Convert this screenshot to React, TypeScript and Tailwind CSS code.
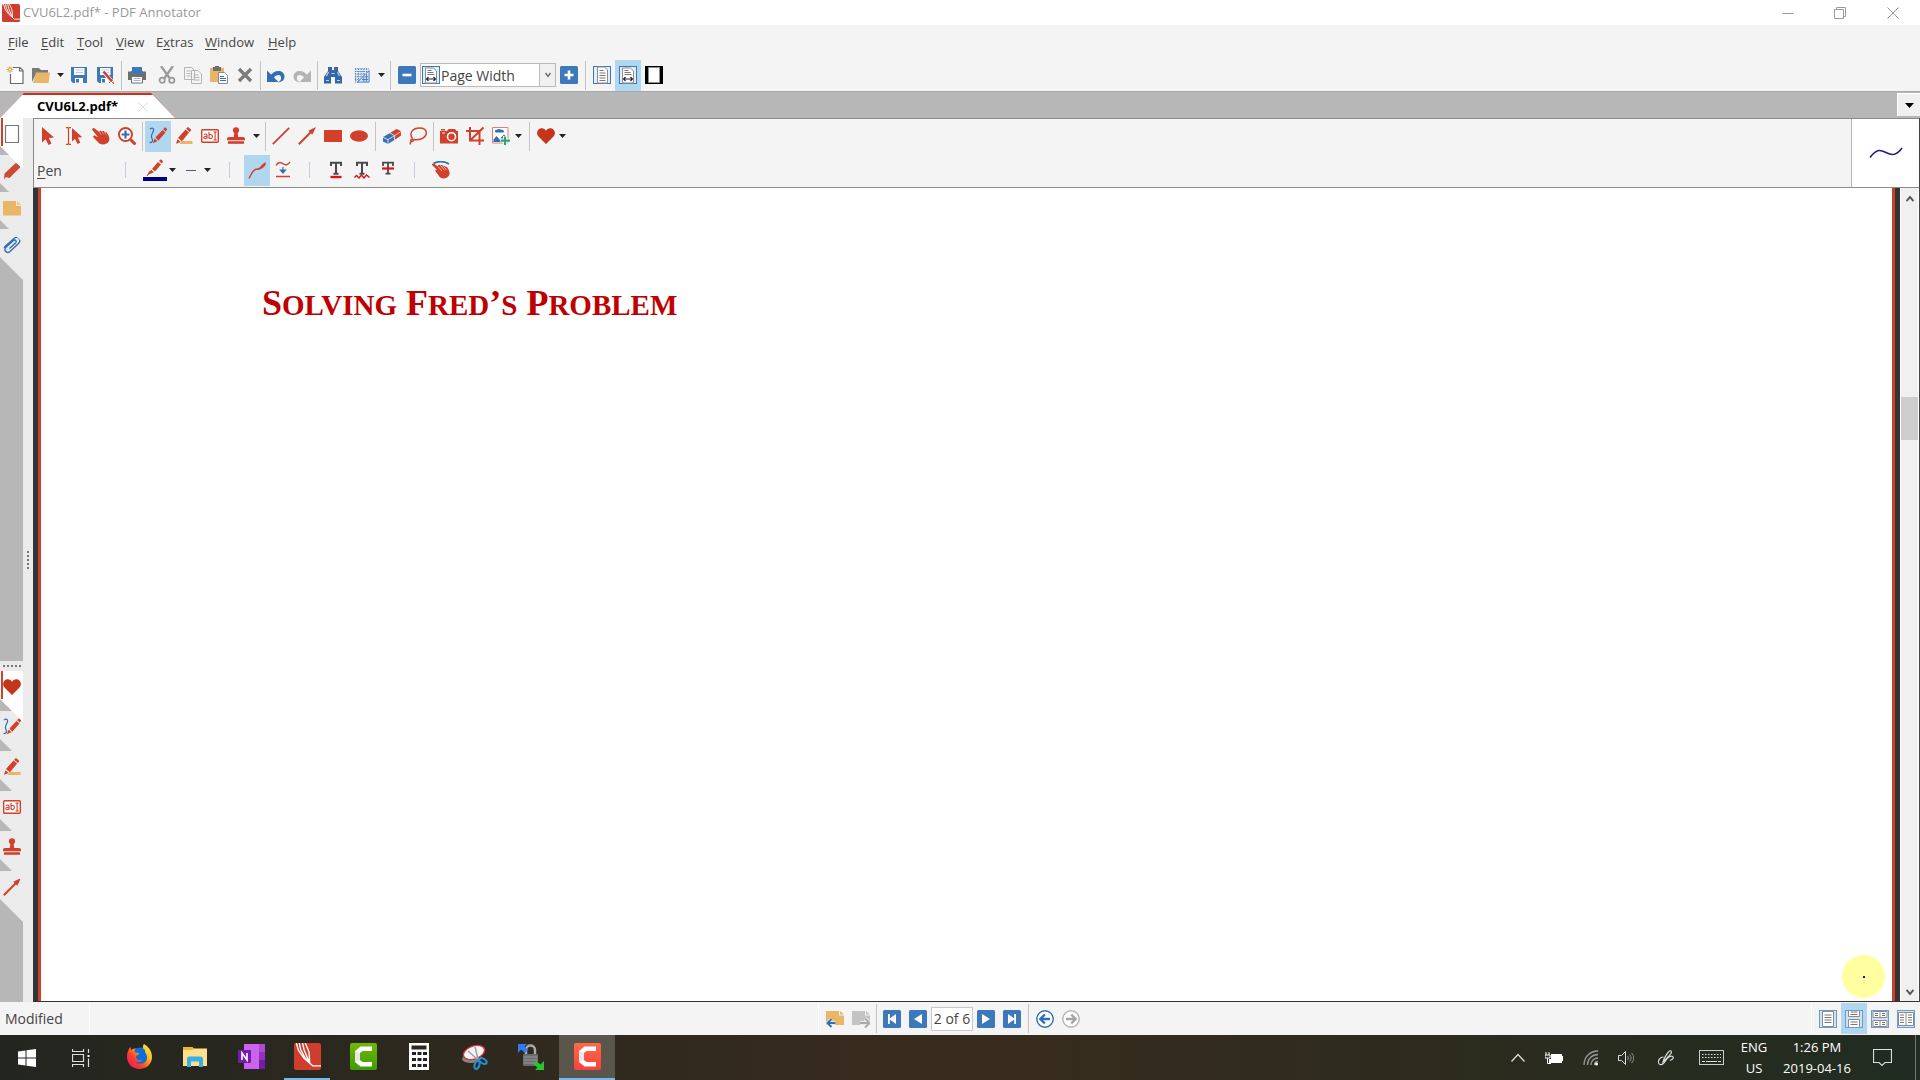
import React from "react";

type IconProps = { children: React.ReactNode; className?: string; box?: string };

const RED = "#d0402b";
const BLUE = "#2f6fb2";

function Icon({ children, className = "size-[18px]", box = "0 0 18 18" }: IconProps) {
  return (
    <svg viewBox={box} className={`shrink-0 ${className}`} fill="none" aria-hidden="true">
      {children}
    </svg>
  );
}

/* ---------- icons ---------- */
const PdfLogo = ({ className = "size-[18px]" }: { className?: string }) => (
  <Icon className={className}>
    <rect width="18" height="18" rx="1.5" fill="#cf3e2c" />
    <path d="M1.500 0 3 5l3.500 5 4 3.500M3.500 0l1 4.500 3 5.500 3 3.500M5.700 0l1 4.500 3.800 9M10.500 13.500 10 6 7.500 0M10.500 13.500 12.500 15.200H18" stroke="#fff" strokeWidth=".9" />
  </Icon>
);

const NewIcon = () => (
  <Icon>
    <path d="M7 1.500h7l3 3v13H4.500V8M13.500 1.500v3.500H17" stroke="#6b6b6b" strokeWidth="1.200" fill="#fff" />
    <path d="M4 0v7M.5 3.500h7M1.500 1l5 5M6.500 1l-5 5" stroke="#e6a444" strokeWidth="1" />
    <circle cx="4" cy="3.500" r="1.500" fill="#fff" stroke="#e6a444" />
  </Icon>
);
const OpenIcon = () => (
  <Icon className="h-[18px] w-5" box="0 0 20 18">
    <path d="M1 16V2h7l2 2h7v4H5z" fill="#7a7a7a" />
    <path d="M5 6.500h14L17.500 17H2z" fill="#eab566" />
  </Icon>
);
const SaveIcon = ({ pen = false }: { pen?: boolean }) => (
  <Icon>
    <path d="M1 1h16v16H3l-2-2z" fill="#3d78ba" />
    <path d="M4 2h10.500v7H4zM5 12h8v5H5z" fill="#fff" />
    <path d="M5.500 4h7.500M5.500 6.500h7.500" stroke="#b9cbe0" />
    <path d="M6 13h3v3.500H6z" fill="#3d78ba" />
    {pen && (
      <>
        <path d="m7.500 5.500 9 11" stroke="#fff" strokeWidth="4" />
        <path d="m7.500 5.500 8.500 10" stroke={RED} strokeWidth="2.600" />
        <path d="m16.500 16 1.500 2" stroke={RED} strokeWidth="1.200" />
      </>
    )}
  </Icon>
);
const PrintIcon = () => (
  <Icon>
    <path d="M4 1h10v5H4z" fill="#3d78ba" />
    <path d="M0 5.500h18V14H0z" fill="#6e6e6e" />
    <path d="M3 5h12v3H3z" fill="#3d78ba" />
    <path d="M3.500 10.500h11v6.500h-11z" fill="#fff" stroke="#6e6e6e" />
    <path d="M5.500 12.500h7M5.500 14.500h7" stroke="#9ab6d5" />
  </Icon>
);
const CutIcon = () => (
  <Icon>
    <path d="m3 0 8.500 12M15 0 6.500 12" stroke="#9a9a9a" strokeWidth="2.300" />
    <circle cx="4.200" cy="14.200" r="2.600" stroke="#9a9a9a" strokeWidth="1.800" />
    <circle cx="13.800" cy="14.200" r="2.600" stroke="#9a9a9a" strokeWidth="1.800" />
  </Icon>
);
const CopyIcon = () => (
  <Icon>
    <path d="M.5 1.500h7l3 3v9H.5zM7.500 4.500h6.500l3.500 3.500v9.500h-10z" fill="#f5f5f5" stroke="#b4b4b4" />
    <path d="M2.500 5h4M2.500 7.500h4M2.500 10h4M9.500 9h5M9.500 11.500h6M9.500 14h6" stroke="#b4b4b4" />
  </Icon>
);
const PasteIcon = () => (
  <Icon>
    <path d="M0 2h14v14H0z" fill="#eab566" />
    <path d="M3 1h2V0h4v1h2v4H3z" fill="#6e6e6e" />
    <path d="M8.500 6.500h6l3 3v8h-9z" fill="#fff" stroke="#8b8b8b" />
    <path d="M10 10.500h4M10 12.500h6M10 14.500h6" stroke={BLUE} />
  </Icon>
);
const DeleteIcon = () => (
  <Icon>
    <path d="m3 3 12 12M15 3 3 15" stroke="#7b7b7b" strokeWidth="3.300" />
  </Icon>
);
const UndoIcon = ({ redo = false }: { redo?: boolean }) => (
  <Icon className={redo ? "size-[18px] -scale-x-100" : "size-[18px]"}>
    <path d="M3 10.500C6 3 17.500 3 17.500 10.500c0 3.500-2.500 5.500-6.500 6 2.500-1.500 3.500-3.500 3-5.500C13 8 9 8.500 6.500 12z" fill={redo ? "#b4b4b4" : BLUE} />
    <path d="M0 4.500V16h11.500z" fill={redo ? "#b4b4b4" : BLUE} />
  </Icon>
);
const FindIcon = () => (
  <Icon>
    <path d="M4 1h4v3h2V1h4v4l4 6v6.500h-7V11H7v6.500H0V11l4-6z" fill="#3568a8" />
    <path d="m2.500 10 2-4M13.500 6l2 4M2 14.500h3M13 14.500h3M7.500 7.500h3" stroke="#bcd0e7" strokeWidth="1.200" />
  </Icon>
);
const GridIcon = () => (
  <Icon className="size-4">
    <path d="M1 2h16M1 5h16M1 8h13M1 11h10M1 14h7M1 17h4M2 2v15M5 2v14M8 2v12M11 2v9M14 2v7" stroke="#3d78ba" strokeDasharray="1.500 1" />
    <path d="M17 4v13H4z" stroke="#3d78ba" fill="#dbe7f4" />
    <path d="M9 14h7M12 11h4M11 11v6M14 8v9" stroke="#3d78ba" />
  </Icon>
);
const PageIcon = ({ width = false }: { width?: boolean }) => (
  <Icon>
    <rect x=".5" y=".5" width="17" height="17" stroke="#3d78ba" fill="#e3eef9" />
    <path d={width ? "M3.500 2h8l3 3v12h-11z" : "M4.500 1h7l3 3v13h-10z"} fill="#fff" stroke="#8f8f8f" />
    <path d={width ? "M5.500 4.500h4M5.500 6.500h6M5.500 8.500h7" : "M6.500 4.500h4M6.500 7h6M6.500 9.500h6M6.500 12h6M6.500 14.500h6"} stroke="#777" />
    {width && <path d="M4.500 13h9M6.500 11l-2 2 2 2M11.500 11l2 2-2 2" stroke="#222" strokeWidth="1.100" />}
  </Icon>
);
const FullPageIcon = () => (
  <Icon>
    <path d="M0 0h18v18H0z" fill="#000" />
    <path d="M3.500 1.500h11v15h-11z" fill="#fff" stroke="#8d8d8d" />
  </Icon>
);
const SquareIcon = ({ d, stroke = false }: { d: string; stroke?: boolean }) => (
  <Icon>
    <rect width="18" height="18" rx="1.500" fill="#3d78ba" />
    <path d={d} fill={stroke ? "none" : "#fff"} stroke={stroke ? "#fff" : "none"} strokeWidth="2.600" />
  </Icon>
);

const PointerIcon = () => (
  <Icon>
    <path d="M2 0v15.500l3.600-3.300L8.500 18l3-1.500L8.800 11 14 10.500z" fill={RED} />
  </Icon>
);
const TextSelectIcon = () => (
  <Icon>
    <path d="M0 .7h1.700l.8.8.8-.8H5M2.500 1v16M0 17.300h1.700l.8-.8.8.8H5" stroke={RED} strokeWidth="1.200" />
    <path d="M6 1v13.500l3-2.800 2.500 5.300 2.800-1.400-2.500-5 4.500-.4z" fill={RED} />
  </Icon>
);
const HandIcon = () => (
  <Icon>
    <path d="M.3 1.800C1 .6 2.200.9 3 1.700L7.300 5c.2-1.300 1.700-1.700 2.600-.4 1-1 2.300-.5 2.900.8 1.300-.5 2.400.2 2.800 1.600 2.500 3.600 2.500 7.700-1 9.600-3.600 1.500-7 .9-8.400-1.300L1.500 10.500c-1-1.700.6-2.500 2-1.600L6 10 .7 3.600C.2 3 0 2.400.3 1.800z" fill={RED} />
    <path d="m7.300 5 1.800 2.500M9.900 4.600l1.800 2.600M12.800 5.400l1.400 2.400" stroke="#f4b5a9" strokeWidth=".7" />
  </Icon>
);
const ZoomIcon = () => (
  <Icon>
    <circle cx="7.500" cy="7.500" r="6.500" fill="#fff" stroke={RED} strokeWidth="2" />
    <path d="m12.500 12.500 5 5" stroke={RED} strokeWidth="3" />
    <path d="M7.500 3.500v8M3.500 7.500h8" stroke={BLUE} strokeWidth="2.200" />
  </Icon>
);
const PenIcon = () => (
  <Icon>
    <path d="M1 2C4 0 5.500 2 4 5S1.500 9 3 11.500 2.500 16 .5 15.500" stroke={BLUE} strokeWidth="1.200" />
    <path d="m6.500 10.500 7-7.500 3 2.600-7.200 8.100z" fill={RED} />
    <path d="m14.200 2.200 1-1.200c.5-.7 1.300-.6 1.900-.1l.5.500c.6.600.6 1.200.1 1.800l-1 1.200z" fill={RED} />
    <path d="m5.700 11.500 2.700 2.700-4.700 2z" fill={RED} />
  </Icon>
);
const MarkerIcon = () => (
  <Icon>
    <path d="M6 14h11.500v3H5z" fill="#eab566" />
    <path d="m3 11 7.500-8.500 3.600 3.100L7 14.200z" fill={RED} />
    <path d="m11.200 1.700 1-1.100c.4-.5 1-.5 1.500-.1l2 1.700c.5.500.6 1 .1 1.600l-1 1.200z" fill={RED} />
    <path d="M2.500 12.200 5.700 15 1 16.800z" fill={RED} />
  </Icon>
);
const TextBoxIcon = () => (
  <Icon>
    <rect x=".7" y="2.700" width="16.600" height="12.600" rx="1" stroke={RED} strokeWidth="1.400" fill="#fff" />
    <path d="M3 7.500c1-.7 3-.7 3 .8v3.500M6 9.300c-2-.2-3.200.2-3.200 1.300 0 1.500 2.500 1.400 3.200 0M8 5v6.700M8 8.500c.7-1.600 3.400-1.400 3.400 1 0 2.500-2.700 2.700-3.400 1M12.500 5h1.200l.4.400.5-.4h1.200M14.100 5.400v7.200M12.500 13h1.200l.4-.4.5.4h1.200" stroke={RED} strokeWidth="1.100" />
  </Icon>
);
const StampIcon = () => (
  <Icon>
    <circle cx="9" cy="3.300" r="3.100" fill={RED} />
    <path d="M7.500 5h3l.7 5H16c1.200 0 2 .8 2 2v1.200H0V12c0-1.200.8-2 2-2h4.800z" fill={RED} />
    <path d="M1 14.200h16V16.800H1z" fill={RED} />
  </Icon>
);
const LineIcon = () => (
  <Icon>
    <path d="M.8 17.200 17.200.8" stroke={RED} strokeWidth="1.800" />
  </Icon>
);
const ArrowIcon = () => (
  <Icon>
    <path d="M.8 17.200 13 5" stroke={RED} strokeWidth="2" />
    <path d="M18 0 10.300 3.700l4 4z" fill={RED} />
  </Icon>
);
const RectIcon = () => (
  <Icon>
    <path d="M0 3h18v12H0z" fill={RED} />
  </Icon>
);
const EllipseIcon = () => (
  <Icon>
    <ellipse cx="9" cy="9" rx="9" ry="5.800" fill={RED} />
  </Icon>
);
const EraserIcon = () => (
  <Icon>
    <path d="M7 6 13.500 2 18 4v4.500L11.500 13 8 10.500z" fill={RED} />
    <path d="M0 10 7 6l4.500 2.500V13L5 17l-5-2.500z" fill="#3972b4" />
    <path d="m0 10.200 5 2.500 6.500-4L18 4.500M5 12.700V17M7 6l4.500 2.700V13" stroke="#eef3f9" strokeWidth=".8" />
  </Icon>
);
const LassoIcon = () => (
  <Icon>
    <path d="M3.500 11.500C-.5 6 4 1 10.500 1c4 0 6.800 1.800 6.800 5 0 4-4.800 6.800-9.300 6.800-2.300 0-4.500-.8-5.500-.3-1.500.7-.8 2.200.5 2 1.500-.2 2-1.300 1.500-2.500M2.500 14.500C1.500 15 1 16 1.500 17.500" stroke={RED} strokeWidth="1.400" />
  </Icon>
);
const CameraIcon = () => (
  <Icon>
    <path d="M1 4h6l1.500-2H15l1.500 2H18v12.500H0V4z" fill={RED} />
    <path d="M1 2h4v1.500H1z" fill={RED} />
    <circle cx="11.500" cy="9.700" r="4" fill={RED} stroke="#fff" strokeWidth="1.600" />
    <path d="M2 6h3" stroke="#fff" />
  </Icon>
);
const CropIcon = () => (
  <Icon>
    <path d="M4 0v13.500h14M0 4h13.500v14M4 13.500 17.500.5" stroke={RED} strokeWidth="2" />
  </Icon>
);
const ImageIcon = () => (
  <Icon>
    <path d="M.5.5h15.500v15.500H.5z" fill="#fff" stroke="#d98175" />
    <path d="M3 4c0-1 1-1.500 2-1.300 1-1 3-1 4 0C10.500 2.500 12 3 12 4.300c0 .8-.8 1.200-1.500 1.200h-6C3.500 5.500 3 5 3 4z" fill={BLUE} />
    <path d="M1.500 15v-2.500L4.500 9 9 14v1zM8.500 11l3.500-3.500 3 3V12H9z" fill={BLUE} />
    <path d="M13 9v9M8.500 13.500H18" stroke="#fff" strokeWidth="4" />
    <path d="M13 9.500V18M9 13.700h9" stroke="#2fa275" strokeWidth="2.200" />
  </Icon>
);
const HeartIcon = () => (
  <Icon>
    <path d="M9 17 1.500 9.500C-1.500 6 .8 1.300 4.700 1.300 6.800 1.300 8.300 2.300 9 4c.7-1.700 2.200-2.700 4.300-2.700 3.900 0 6.200 4.700 3.200 8.200z" fill="#c5351c" />
  </Icon>
);
const StrokeIcon = () => (
  <Icon>
    <path d="M1 17.500C3.500 13 4.500 9 8 8.300s5-.5 7-4.300" stroke={RED} strokeWidth="1.400" />
    <path d="M8 8.700C11.500 8 13 4 15.500 2.500L17.500 1l.3 2.500C16 6.500 13 9 8 9z" fill={RED} />
  </Icon>
);
const SmoothIcon = () => (
  <Icon>
    <path d="M2 4.500C5-.5 8 2 9.500 3S14 4.500 16 1M2 15.500h14" stroke={RED} strokeWidth="1.400" />
    <path d="M9 6v5.500M6.500 9 9 12l2.500-3z" stroke={BLUE} fill={BLUE} strokeWidth="1.200" />
  </Icon>
);
const LetterIcon = ({ kind }: { kind: "under" | "wave" | "strike" }) => (
  <Icon>
    <path d="M4 5V1.700h10V5M9 1.700v11M6.500 12.700h5" stroke="#4a4a4a" strokeWidth={kind === "strike" ? 1.800 : 2} />
    {kind === "under" && <path d="M3.500 16h11" stroke="#e01010" strokeWidth="2.400" />}
    {kind === "wave" && <path d="m1.500 16.500 2-2 2.500 2.500L8.500 14l2.500 3 2.500-3 3 2.500" stroke="#e01010" strokeWidth="1.400" />}
    {kind === "strike" && <path d="M3 7.500h12" stroke="#e01010" strokeWidth="2.200" />}
  </Icon>
);
const GestureIcon = () => (
  <Icon>
    <path d="M1.500 2.500C5.500 0 12 0 17 3" stroke={BLUE} strokeWidth="1.800" />
    <path d="M0 3.200c.7-1 2-.6 2.800.1L6.500 6l-.7-1.500c.8-1.300 2-.9 2.800.1.900-1 2-.6 2.600.3 1-.6 2.200 0 2.500 1 .9-.3 1.600.2 1.900 1.100 2.400 3.500 3 7-.1 9.200-3 1.800-6 1.800-8-.4l-4-5.500c-.7-1.300.5-2 1.700-1.300L1 5C.2 4.300-.2 3.800 0 3.200z" fill={RED} />
    <path d="m6.500 6 3.500 4M8.600 4.600l4 4.700M11.200 4.900l3.300 4" stroke="#fff" strokeWidth=".6" />
  </Icon>
);
const ThumbPenIcon = () => (
  <Icon>
    <path d="M1.500 11.500 13 .8 17.500 5 6.500 16l-3.500-1-2 2.500z" fill="#cb4a33" />
  </Icon>
);
const NoteIcon = () => (
  <Icon>
    <path d="M0 2h13v5h5v9.500H0z" fill="#eab566" />
    <path d="M14 2v4h4z" fill="#f0c886" />
  </Icon>
);
const ClipIcon = () => (
  <Icon>
    <path d="m6.500 12.500 6-5.500c1.800-1.800-.5-4-2.300-2.300L3 11.200c-3 3 1 7 4 4.300l8.500-8C19 4 14.500-.8 11 2.500L2.500 10c-.5.500-1 1.200-1.200 2" stroke={BLUE} strokeWidth="1.400" />
  </Icon>
);
const BlankPageIcon = () => (
  <Icon>
    <path d="M2.500.5h13v17h-13z" fill="#fff" stroke="#777" strokeWidth="1.200" />
  </Icon>
);
const NavNoteIcon = ({ next = false }: { next?: boolean }) => (
  <Icon>
    <path d="M0 1h13v4.500h5V15H0z" fill={next ? "#c4c4c4" : "#eab566"} />
    <path d="M14 1v3.500h4z" fill={next ? "#c4c4c4" : "#eab566"} />
    {next ? (
      <path d="M8 13h9M13 8.500l4.500 4.500-4.500 4.500" stroke="#f4f4f4" strokeWidth="3.600" />
    ) : (
      <path d="M1.500 13h8M5.500 9 1.500 13l4 4" stroke="#f4f4f4" strokeWidth="3.600" />
    )}
    {next ? (
      <path d="M8 13h9M13 8.500l4.500 4.500-4.500 4.500" stroke="#a9a9a9" strokeWidth="2" />
    ) : (
      <path d="M1.500 13h8M5.500 9 1.500 13l4 4" stroke={BLUE} strokeWidth="2" />
    )}
  </Icon>
);
const RoundArrow = ({ next = false }: { next?: boolean }) => (
  <Icon className={next ? "size-[18px] -scale-x-100" : "size-[18px]"}>
    <circle cx="9" cy="9" r="8.200" fill="#fff" stroke={next ? "#b5b5b5" : BLUE} strokeWidth="1.400" />
    <path d="M4.500 9h9.500M8.800 4.500 4.300 9l4.500 4.500" stroke={next ? "#a5a5a5" : BLUE} strokeWidth="2.400" />
  </Icon>
);
const ViewIcon = ({ d, pages }: { d: string; pages: string }) => (
  <Icon>
    <rect x=".5" y=".5" width="17" height="17" stroke="#6b9bd0" fill="#cfe2f4" />
    <path d={pages} fill="#fff" stroke="#8b8b8b" />
    <path d={d} stroke="#777" />
  </Icon>
);

/* ---------- building blocks ---------- */
function ToolButton({ label, active = false, children, className = "w-[26px]" }: { label: string; active?: boolean; children: React.ReactNode; className?: string }) {
  return (
    <button type="button" aria-label={label} className={`flex h-[31px] shrink-0 items-center justify-center ${className} ${active ? "bg-[#b1d6f0]" : ""}`}>
      {children}
    </button>
  );
}
const Caret = ({ label, className = "w-3" }: { label: string; className?: string }) => (
  <ToolButton label={label} className={className}>
    <svg viewBox="0 0 7 4" className="h-1 w-[7px] shrink-0" aria-hidden="true">
      <path d="M0 0h7L3.500 4z" fill="#222" />
    </svg>
  </ToolButton>
);
const Sep = ({ className = "mx-0.5 h-[29px] bg-[#c4c4c4]" }: { className?: string }) => <div className={`w-px shrink-0 ${className}`} />;

function SideTabs({ items, pitch }: { items: { label: string; icon: React.ReactNode }[]; pitch: string }) {
  return (
    <div className="flex flex-col">
      {items.map((it, i) => (
        <div key={it.label} className={pitch} style={{ zIndex: items.length - i }}>
          <button
            type="button"
            aria-label={it.label}
            className={`flex h-[51px] w-[23px] items-start [clip-path:polygon(0_0,100%_0,100%_100%,0_28px)] ${i === 0 ? "bg-white" : "bg-[#ebebeb]"}`}
          >
            <span className={`ml-px h-7 w-0.5 ${i === 0 ? "bg-[#d0402b]" : ""}`} />
            <span className="flex h-8 items-center">{it.icon}</span>
          </button>
        </div>
      ))}
    </div>
  );
}

const MENUS = [
  ["", "F", "ile", "w-[33px]"],
  ["", "E", "dit", "w-9"],
  ["", "T", "ool", "w-[39px]"],
  ["", "V", "iew", "w-10"],
  ["E", "x", "tras", "w-[49px]"],
  ["", "W", "indow", "w-[63px]"],
  ["", "H", "elp", "w-10"],
];

function TaskItem({ label, children, className = "w-14 border-transparent" }: { label: string; children: React.ReactNode; className?: string }) {
  return (
    <button type="button" aria-label={label} className={`flex h-[45px] shrink-0 items-center justify-center border-b-2 ${className}`}>
      {children}
    </button>
  );
}

const CamtasiaIcon = ({ from, to, id }: { from: string; to: string; id: string }) => (
  <Icon className="size-[27px]" box="0 0 27 27">
    <defs>
      <linearGradient id={id} x1="0" y1="0" x2="0" y2="1">
        <stop stopColor={from} />
        <stop offset="1" stopColor={to} />
      </linearGradient>
    </defs>
    <rect width="27" height="27" rx="2" fill={`url(#${id})`} />
    <path d="M22 3.500V8h-9.500l-2.500 2v7l2.500 2H22v4.500H10.500L5 19V8l5.500-4.500z" fill="#fff" />
    <path d="m5 8 5 2v7l-5 2z" fill="#e6e6e6" />
  </Icon>
);

export default function App() {
  return (
    <div className="flex h-screen w-full flex-col overflow-hidden bg-[#f4f4f4] font-['Open_Sans','Noto_Sans',sans-serif] text-[14px] text-[#444]">
      {/* Title bar */}
      <header className="flex h-[25px] shrink-0 items-center bg-white pl-[2px]">
        <PdfLogo />
        <h1 className="ml-[3px] text-[13px] text-[#999]">CVU6L2.pdf* - PDF Annotator</h1>
        <div className="ml-auto flex items-center">
          <button type="button" aria-label="Minimize" className="flex w-[52px] justify-center">
            <Icon className="size-3" box="0 0 12 12"><path d="M.5 6.500h11" stroke="#999" /></Icon>
          </button>
          <button type="button" aria-label="Restore" className="flex w-[52px] justify-center">
            <Icon className="size-3" box="0 0 12 12"><path d="M.5 2.500h9v9h-9zM2.500 2V.5h9v9H10" stroke="#999" /></Icon>
          </button>
          <button type="button" aria-label="Close" className="flex w-[54px] justify-center">
            <Icon className="size-3" box="0 0 12 12"><path d="m.5.5 11 11M11.500.5l-11 11" stroke="#999" /></Icon>
          </button>
        </div>
      </header>

      {/* Menu */}
      <nav className="flex h-[34px] shrink-0 items-center pl-2 pt-0.5 text-[13px]">
        {MENUS.map(([pre, key, post, width]) => (
          <button type="button" key={key + post} className={`text-left ${width}`}>
            {pre}<span className="underline underline-offset-2">{key}</span>{post}
          </button>
        ))}
      </nav>

      {/* Main toolbar */}
      <div className="flex h-8 shrink-0 items-center pl-[2px]">
        <ToolButton label="New"><NewIcon /></ToolButton>
        <ToolButton label="Open"><OpenIcon /></ToolButton>
        <Caret label="Recent files" />
        <ToolButton label="Save"><SaveIcon /></ToolButton>
        <ToolButton label="Save as"><SaveIcon pen /></ToolButton>
        <Sep className="ml-[3px] mr-0.5 h-[29px] bg-[#c4c4c4]" />
        <ToolButton label="Print"><PrintIcon /></ToolButton>
        <div className="ml-1 flex">
          <ToolButton label="Cut"><CutIcon /></ToolButton>
          <ToolButton label="Copy"><CopyIcon /></ToolButton>
          <ToolButton label="Paste"><PasteIcon /></ToolButton>
          <ToolButton label="Delete"><DeleteIcon /></ToolButton>
        </div>
        <Sep />
        <ToolButton label="Undo"><UndoIcon /></ToolButton>
        <ToolButton label="Redo"><UndoIcon redo /></ToolButton>
        <Sep />
        <ToolButton label="Find"><FindIcon /></ToolButton>
        <div className="ml-[3px] flex">
          <ToolButton label="Grid"><GridIcon /></ToolButton>
          <Caret label="Grid options" />
        </div>
        <Sep className="mx-[3px] h-[29px] bg-[#c4c4c4]" />
        <ToolButton label="Zoom out"><SquareIcon d="M4.500 9h9" stroke /></ToolButton>
        <div className="flex h-6 w-[136px] shrink-0 items-center border border-[#b9b9b9] bg-white pl-px">
          <PageIcon width />
          <div className="relative flex h-full flex-1">
            <select aria-label="Zoom" className="h-full w-full appearance-none bg-transparent pl-px text-[14px] outline-none">
              <option>Page Width</option>
            </select>
            <span className="pointer-events-none absolute inset-y-0 right-0 flex w-4 items-center justify-center border-l border-[#b9b9b9] bg-[#f0f0f0]">
              <Icon className="size-2" box="0 0 8 8"><path d="m1.500 2 2.500 3.500L6.500 2" stroke="#666" strokeWidth="1.300" /></Icon>
            </span>
          </div>
        </div>
        <ToolButton label="Zoom in"><SquareIcon d="M4.500 9h9M9 4.500v9" stroke /></ToolButton>
        <Sep className="mx-[3px] h-[29px] bg-[#c4c4c4]" />
        <ToolButton label="Full page"><PageIcon /></ToolButton>
        <ToolButton label="Page width" active><PageIcon width /></ToolButton>
        <ToolButton label="Full screen"><FullPageIcon /></ToolButton>
      </div>

      {/* Document tabs */}
      <div className="flex h-[27px] shrink-0 items-end justify-between border-t border-[#a8a8a8] bg-[#b7b7b7]">
        <div className="flex h-[25px] w-[175px] bg-[#d0301a] [clip-path:polygon(24px_0,151px_0,100%_100%,0_100%)]">
          <div className="mt-0.5 flex flex-1 items-center bg-white pl-[37px] text-black">
            <button type="button" className="text-[13px] font-bold">CVU6L2.pdf*</button>
            <button type="button" aria-label="Close tab" className="ml-auto mr-[27px]">
              <Icon className="size-[10px]" box="0 0 10 10"><path d="m.5.5 9 9M9.500.5l-9 9" stroke="#ddd" /></Icon>
            </button>
          </div>
        </div>
        <button type="button" aria-label="Tab list" className="mb-[2px] flex h-[23px] w-[23px] items-center justify-center border-l border-t border-white bg-[#f0f0f0]">
          <Icon className="h-[5px] w-[9px]" box="0 0 9 5"><path d="M0 0h9L4.500 5z" fill="#000" /></Icon>
        </button>
      </div>

      <div className="flex min-h-0 flex-1">
        {/* Side panel */}
        <aside className="flex w-[33px] shrink-0 bg-[#ebebeb]">
          <div className="flex w-[23px] flex-col">
            <div className="h-[543px] shrink-0 bg-[#b7b7b7]">
              <SideTabs
                pitch="relative h-[37px]"
                items={[
                  { label: "Pages", icon: <BlankPageIcon /> },
                  { label: "Annotations", icon: <ThumbPenIcon /> },
                  { label: "Bookmarks", icon: <NoteIcon /> },
                  { label: "Attachments", icon: <ClipIcon /> },
                ]}
              />
            </div>
            <div className="flex h-[10px] shrink-0 items-center justify-center gap-0.5">
              {[0, 1, 2, 3, 4].map((n) => <span key={n} className="size-0.5 bg-[#777]" />)}
            </div>
            <div className="flex-1 bg-[#b7b7b7]">
              <SideTabs
                pitch="relative h-10"
                items={[
                  { label: "Favorites", icon: <HeartIcon /> },
                  { label: "Pen favorites", icon: <PenIcon /> },
                  { label: "Marker favorites", icon: <MarkerIcon /> },
                  { label: "Text favorites", icon: <TextBoxIcon /> },
                  { label: "Stamp favorites", icon: <StampIcon /> },
                  { label: "Arrow favorites", icon: <ArrowIcon /> },
                ]}
              />
            </div>
          </div>
          <div className="flex flex-1 flex-col items-center gap-0.5 pt-[433px]">
            {[0, 1, 2, 3, 4].map((n) => <span key={n} className="size-0.5 bg-[#777]" />)}
          </div>
        </aside>

        <main className="flex min-w-0 flex-1 flex-col border-r border-[#444]">
          {/* Annotation toolbars */}
          <div className="flex h-[70px] shrink-0 border-y border-l border-[#8b8b8b]">
            <div className="min-w-0 flex-1">
              <div className="flex h-[34px] items-center pl-[2px]">
                <ToolButton label="Select"><PointerIcon /></ToolButton>
                <ToolButton label="Select text"><TextSelectIcon /></ToolButton>
                <ToolButton label="Pan"><HandIcon /></ToolButton>
                <ToolButton label="Zoom tool"><ZoomIcon /></ToolButton>
                <Sep />
                <ToolButton label="Pen" active><PenIcon /></ToolButton>
                <ToolButton label="Marker"><MarkerIcon /></ToolButton>
                <ToolButton label="Text"><TextBoxIcon /></ToolButton>
                <ToolButton label="Stamp"><StampIcon /></ToolButton>
                <Caret label="Stamp options" className="w-[14px]" />
                <Sep />
                <ToolButton label="Line"><LineIcon /></ToolButton>
                <ToolButton label="Arrow"><ArrowIcon /></ToolButton>
                <ToolButton label="Rectangle"><RectIcon /></ToolButton>
                <ToolButton label="Ellipse"><EllipseIcon /></ToolButton>
                <Sep className="mx-[3px] h-[29px] bg-[#c4c4c4]" />
                <ToolButton label="Eraser"><EraserIcon /></ToolButton>
                <ToolButton label="Lasso"><LassoIcon /></ToolButton>
                <Sep />
                <ToolButton label="Snapshot"><CameraIcon /></ToolButton>
                <ToolButton label="Crop"><CropIcon /></ToolButton>
                <ToolButton label="Insert image"><ImageIcon /></ToolButton>
                <Caret label="Image options" className="w-2" />
                <Sep className="ml-[7px] mr-[3px] h-[29px] bg-[#c4c4c4]" />
                <ToolButton label="Favorites menu"><HeartIcon /></ToolButton>
                <Caret label="Favorites options" className="w-1.5" />
              </div>
              <div className="flex h-[34px] items-center pl-[3px]">
                <span className="w-[88px] text-[14px]"><span className="underline underline-offset-2">P</span>en</span>
                <Sep className="h-4 bg-[#c4cde0]" />
                <ToolButton label="Pen color" className="ml-4 w-[26px] flex-col">
                  <Icon>
                    <path d="m6 10 6-7 3 2.600-6 7zM13 2l1-1c.6-.6 1.200-.5 1.700 0l.8.800c.5.5.5 1.100 0 1.700l-.8 1zM5 10.800l3 2.500L1.500 16z" fill={RED} />
                    <path d="M1 17 4 12" stroke={RED} />
                  </Icon>
                  <span className="h-[4px] w-6 bg-[#00007e]" />
                </ToolButton>
                <Caret label="Pen color options" className="w-2" />
                <ToolButton label="Line width" className="ml-[3px] w-6"><span className="h-px w-[10px] bg-[#4c5d82]" /></ToolButton>
                <Caret label="Line width options" className="w-2" />
                <Sep className="ml-[18px] h-4 bg-[#c4cde0]" />
                <ToolButton label="Freehand" active className="ml-[14px] w-[26px]"><StrokeIcon /></ToolButton>
                <ToolButton label="Smooth"><SmoothIcon /></ToolButton>
                <Sep className="mx-[13px] h-4 bg-[#c4cde0]" />
                <ToolButton label="Underline text"><LetterIcon kind="under" /></ToolButton>
                <ToolButton label="Squiggly text"><LetterIcon kind="wave" /></ToolButton>
                <ToolButton label="Strike out text"><LetterIcon kind="strike" /></ToolButton>
                <Sep className="mx-[13px] h-4 bg-[#c4cde0]" />
                <ToolButton label="Touch input"><GestureIcon /></ToolButton>
              </div>
            </div>
            <div className="flex w-[68px] items-center justify-center border-l border-[#b5b5b5] bg-white">
              <Icon className="h-3 w-[34px]" box="0 0 34 12">
                <path d="M1 10.500C8 1 12 3 17 5.500s10 4 16-4.500" stroke="#1a1a8c" strokeWidth="1.500" />
              </Icon>
            </div>
          </div>

          {/* Document */}
          <div className="flex min-h-0 flex-1 border-b border-[#333]">
            <div className="w-[5px] shrink-0 bg-[#333436]" />
            <article className="relative min-w-0 flex-1 border-x-[3px] border-[#cb3f2b] bg-white">
              <h2 className="pl-[221px] pt-[94px] font-['Liberation_Serif',serif] text-[29px] font-bold uppercase leading-[42px] text-[#c00000]">
                <span className="text-[36px]">S</span>olving<span className="text-[36px]"> F</span>red<span className="text-[36px]">’</span>s<span className="text-[36px]"> P</span>roblem
              </h2>
              <div className="absolute bottom-[3px] right-[7px] flex size-[43px] items-center justify-center rounded-full bg-[#ffffa0]">
                <span className="size-0.5 bg-[#1a1a8c]" />
              </div>
            </article>
            <div className="w-[5px] shrink-0 bg-[#333436]" />
            <div className="flex w-[19px] shrink-0 flex-col border-x border-white bg-[#f0f0f0]">
              <button type="button" aria-label="Scroll up" className="flex h-[22px] items-center justify-center">
                <Icon className="size-2" box="0 0 8 8"><path d="m.5 6 3.500-4 3.500 4" stroke="#555" strokeWidth="1.900" /></Icon>
              </button>
              <div className="grow-[187]" />
              <div className="h-[43px] bg-[#cdcdcd]" />
              <div className="grow-[543]" />
              <button type="button" aria-label="Scroll down" className="flex h-[18px] items-center justify-center">
                <Icon className="size-2" box="0 0 8 8"><path d="m.5 2 3.500 4 3.500-4" stroke="#555" strokeWidth="1.900" /></Icon>
              </button>
            </div>
          </div>
        </main>
      </div>

      {/* Status bar */}
      <footer className="flex h-[33px] shrink-0 items-center">
        <div className="flex flex-1 items-center">
          <span className="w-[84px] pl-[5px] text-[14px]">Modified</span>
          <Sep className="ml-[5px] h-[29px] bg-white" />
        </div>
        <div className="mr-[17px] flex items-center">
          <Sep className="mr-[3px] h-[29px] bg-white" />
          <ToolButton label="Previous annotated page"><NavNoteIcon /></ToolButton>
          <ToolButton label="Next annotated page"><NavNoteIcon next /></ToolButton>
          <Sep />
          <ToolButton label="First page"><SquareIcon d="M5 4h1.800v4.500L13 4v10L6.800 9.500V14H5z" /></ToolButton>
          <ToolButton label="Previous page"><SquareIcon d="M13 4v10L5 9z" /></ToolButton>
          <input aria-label="Page" defaultValue="2 of 6" className="h-6 w-[42px] border border-[#c8c8c8] bg-white text-center text-[14px] outline-none" />
          <ToolButton label="Next page"><SquareIcon d="M5 4v10l8-5z" /></ToolButton>
          <ToolButton label="Last page"><SquareIcon d="M13 4h-1.800v4.500L5 4v10l6.200-4.500V14H13z" /></ToolButton>
          <Sep className="mx-[3px] h-[29px] bg-[#c4c4c4]" />
          <ToolButton label="Back"><RoundArrow /></ToolButton>
          <ToolButton label="Forward"><RoundArrow next /></ToolButton>
        </div>
        <div className="flex flex-1 items-center justify-end pr-px">
          <Sep className="mr-[3px] h-[29px] bg-white" />
          <ToolButton label="Single page"><ViewIcon pages="M3.500 1.500h11v15h-11z" d="M5.500 5h7M5.500 7.500h7M5.500 10h7M5.500 12.500h7" /></ToolButton>
          <ToolButton label="Continuous" active><ViewIcon pages="M3.500 1v5.500h11V1M3.500 17V9.500h11V17" d="M5.500 2h7M5.500 4.500h7M5.500 12h7M5.500 14.500h7" /></ToolButton>
          <ToolButton label="Two pages continuous"><ViewIcon pages="M2 1.500h14v6H2zM2 10.500h14v6H2zM9 1v6.500M9 10.500v6" d="M4 3.500h3M4 5.500h3M11 3.500h3M11 5.500h3M4 12.500h3M4 14.500h3M11 12.500h3M11 14.500h3" /></ToolButton>
          <ToolButton label="Two pages"><ViewIcon pages="M1.500 2.500h15v13h-15zM9 2.500v13" d="M3 5h4M3 7.500h4M3 10h4M3 12.500h4M11 5h4M11 7.500h4M11 10h4M11 12.500h4" /></ToolButton>
        </div>
      </footer>

      {/* Taskbar */}
      <div className="flex h-[45px] shrink-0 items-center bg-linear-to-r from-[#23261f] via-[#382b1d] via-50% to-[#202c20] text-white">
        <div className="flex w-[111px] shrink-0">
          <button type="button" aria-label="Start" className="flex h-[45px] w-[53px] items-center justify-center">
            <Icon><path d="m0 2.500 7.500-1v7H0zM8.500 1.300 18 0v8.500H8.500zM0 9.500h7.500v7L0 15.500zM8.500 9.500H18V18l-9.500-1.300z" fill="#fff" /></Icon>
          </button>
          <button type="button" aria-label="Task view" className="flex h-[45px] w-14 items-center justify-center">
            <Icon><path d="M.5 0v2.500h11V0M.5 18v-2.500h11V18M.5 5.500h11v7H.5zM16.500 0v4M16.500 9.500V18" stroke="#ddd" strokeWidth="1.200" /><path d="M15.500 6h2v2h-2z" fill="#fff" /></Icon>
          </button>
        </div>
        <TaskItem label="Firefox">
          <Icon className="size-[25px]" box="0 0 25 25">
            <defs><linearGradient id="ff" x1="1" y1="0" x2="0" y2="1"><stop stopColor="#fff44f" /><stop offset=".35" stopColor="#ffb81c" /><stop offset=".65" stopColor="#ff3c2e" /><stop offset="1" stopColor="#e3126b" /></linearGradient></defs>
            <circle cx="13" cy="12" r="8.500" fill="#0a6fd8" />
            <path d="M17 0c5 3 8 7.500 8 13 0 7-5.500 12-12.500 12S0 20 0 13C0 8 1.500 5 3.500 3l.5 3c1.500-1.500 3.500-1.500 5-1.500C7.500 6 7 7.500 8 8.500l4 .5c0 2-3 2.500-3 4 0 3 4 4 6 2.500-1 3-5 3-7 2 3 4 12 3 12-4 0-2.500-1-4-2-5.500V6C16 5 15 3 17 0z" fill="url(#ff)" />
          </Icon>
        </TaskItem>
        <TaskItem label="File Explorer">
          <Icon className="h-5 w-6" box="0 0 24 20">
            <path d="M0 0h9l2 1.500h13V19H0z" fill="#fde08e" /><path d="M0 0h9l2 1.500-1.500 1.500H0z" fill="#f0b52d" />
            <path d="M4 20v-8c0-1.500 1-2.500 2.500-2.500h11c1.500 0 2.500 1 2.500 2.500v8h-4v-5.500H8V20z" fill="#35b1e6" />
          </Icon>
        </TaskItem>
        <TaskItem label="OneNote">
          <Icon className="h-[25px] w-[27px]" box="0 0 27 25">
            <path d="M6 0h15v25H6z" fill="#ca64ea" /><path d="M21 0h6v8h-6z" fill="#ae4bd5" /><path d="M21 8h6v8h-6z" fill="#9332bf" /><path d="M21 16h6v9h-6z" fill="#7719aa" />
            <rect y="6" width="13" height="13" rx="1" fill="#7719aa" /><path d="M4 16V9l5 7V9" stroke="#fff" strokeWidth="1.600" />
          </Icon>
        </TaskItem>
        <TaskItem label="PDF Annotator" className="mx-[5px] w-[46px] border-[#76b9ed]"><PdfLogo className="size-[27px]" /></TaskItem>
        <TaskItem label="Camtasia"><CamtasiaIcon from="#72b800" to="#3e9b06" id="camGreen" /></TaskItem>
        <TaskItem label="Calculator">
          <Icon className="h-[27px] w-5" box="0 0 20 27">
            <path d="M0 0h20v27H0z" fill="#fff" /><path d="M2.500 2.500h15v4h-15z" fill="#2f271c" />
            <path d="M3 10.500h4M8.500 10.500h4M14 10.500h4M3 16.500h4M8.500 16.500h4M14 16.500h4M3 22.500h4M8.500 22.500h4M14 22.500h4" stroke="#222" strokeWidth="2.800" />
          </Icon>
        </TaskItem>
        <TaskItem label="Snipping Tool">
          <Icon className="size-[26px]" box="0 0 26 26">
            <ellipse cx="9" cy="15" rx="9" ry="4" fill="#858585" />
            <ellipse cx="12" cy="8.500" rx="11" ry="6.500" transform="rotate(-20 12 8.500)" fill="#f4f4f4" stroke="#d8333b" strokeWidth="1.300" />
            <path d="m13 3 3 12M6 7l9 8" stroke="#9aa0a6" strokeWidth="1.500" />
            <ellipse cx="15" cy="21" rx="2.300" ry="4" transform="rotate(20 15 21)" stroke="#2490d6" strokeWidth="2" />
            <ellipse cx="21" cy="17" rx="2.300" ry="4" transform="rotate(-60 21 17)" stroke="#2490d6" strokeWidth="2" />
          </Icon>
        </TaskItem>
        <TaskItem label="File transfer">
          <Icon className="size-[26px]" box="0 0 26 26">
            <path d="M8 11V6c0-6 9-6 9 0v5" stroke="#a9a9a9" strokeWidth="2.500" />
            <rect x="5" y="10" width="15" height="12" rx="1" fill="#6b6b6b" /><path d="M5.500 13h14M5.500 16h14M5.500 19h14" stroke="#999" />
            <path d="M0 0h9L6.500 2.500 10 6l-3 3-4-3.500L0 9z" fill="#2e7df6" /><path d="M26 26h-9l2.500-2.500L15 20l3-3 4.500 3.500L26 17z" fill="#29c32e" />
          </Icon>
        </TaskItem>
        <TaskItem label="Camtasia Recorder" className="w-14 border-[#76b9ed] bg-[#5b564b]"><CamtasiaIcon from="#ff6a4a" to="#f9423f" id="camRed" /></TaskItem>

        <div className="ml-auto flex items-center">
          <button type="button" aria-label="Show hidden icons" className="flex w-8 justify-center"><Icon className="size-[14px]" box="0 0 14 14"><path d="m.5 10.500 6.500-7 6.500 7" stroke="#ddd" strokeWidth="1.300" /></Icon></button>
          <button type="button" aria-label="Battery" className="flex w-10 justify-center"><Icon className="h-3 w-[18px]" box="0 0 18 12"><path d="M6 2h11v9H4V7h2zM17 4h1v5h-1z" fill="#fff" /><path d="M1 0v3M4 0v3M0 3h5v3H0zM2.500 6v5.500H6" stroke="#fff" /></Icon></button>
          <button type="button" aria-label="Network" className="flex w-[34px] justify-center"><Icon className="size-4" box="0 0 16 16"><path d="M1 15C1 7 7 1 15 1M4.500 15C4.500 9 9 4.500 15 4.500M8 15c0-4 3-7 7-7M11.500 15c0-2 1.500-3.500 3.500-3.500" stroke="#999" strokeWidth="1.300" /><circle cx="13.500" cy="14" r="1.500" fill="#fff" /></Icon></button>
          <button type="button" aria-label="Volume" className="flex w-[35px] justify-center"><Icon className="size-4" box="0 0 16 16"><path d="M.5 5.500h3L7.500 1.500v13l-4-4h-3z" stroke="#ddd" /><path d="M9.500 6c1 1 1 3 0 4M11.500 4.500c2 2 2 5 0 7M13.500 3c3 3 3 7 0 10" stroke="#999" /></Icon></button>
          <button type="button" aria-label="Windows Ink" className="flex w-[46px] justify-center"><Icon className="size-4" box="0 0 16 16"><path d="M5 12C6 8 10 2 11.500 1S14 2 13 3.500 8 9 5 12zM5.500 7C2 7 0 10 .5 12.500S4 15.500 6 13s2-4 5-6 5 0 4 1.500-2 1-3 2" stroke="#ddd" strokeWidth="1.200" /></Icon></button>
          <button type="button" aria-label="Touch keyboard" className="flex w-11 justify-center"><Icon className="h-[15px] w-[25px]" box="0 0 25 15"><rect x=".5" y=".5" width="24" height="14" stroke="#ccc" /><path d="M3 4.500h19M3 7.500h19" stroke="#ddd" strokeDasharray="1.500 1.500" /><path d="M3 11.500h3M7 11.500h11M19 11.500h3" stroke="#ddd" /></Icon></button>
          <button type="button" aria-label="Input language" className="w-[42px] text-center text-[13px] leading-[21px]">ENG<br />US</button>
          <button type="button" aria-label="Date and time" className="w-[84px] text-center text-[13px] leading-[21px]">1:26 PM<br />2019-04-16</button>
          <button type="button" aria-label="Notifications" className="flex w-[46px] justify-center"><Icon className="size-[19px]" box="0 0 19 19"><path d="M.5 1.500h18v13H12L9 17.500l-3-3H.5z" stroke="#ddd" strokeWidth="1.200" /></Icon></button>
          <button type="button" aria-label="Show desktop" className="ml-2.5 mr-1 h-[45px] w-px bg-[#777]" />
        </div>
      </div>
    </div>
  );
}
